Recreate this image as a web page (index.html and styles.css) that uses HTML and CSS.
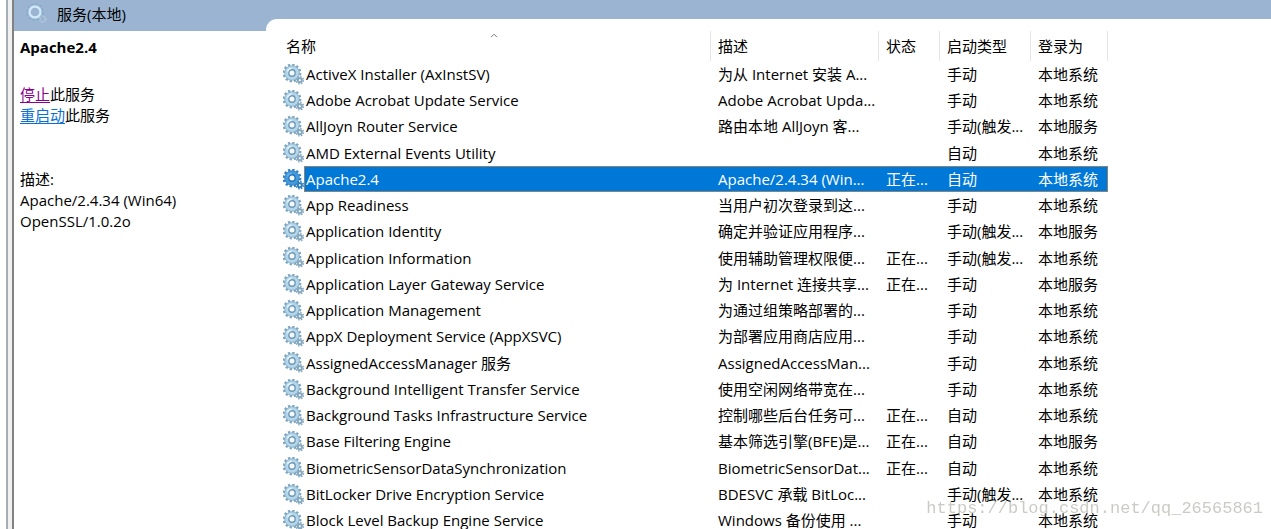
FILE: index.html
```
<!DOCTYPE html>
<html lang="zh-CN">
<head>
  <meta charset="UTF-8" />
  <meta name="viewport" content="width=device-width, initial-scale=1" />
  <title>服务</title>
  <link rel="stylesheet" href="styles.css">
</head>
<body>

  <!-- gear icons shared by all rows -->
  <svg class="defs" aria-hidden="true">
    <defs>
      <g id="gearShape">
        <circle cx="9" cy="9" r="8.2" fill="none" stroke="var(--teeth)" stroke-width="2.4" stroke-dasharray="2.3 1.99" />
        <circle cx="9" cy="9" r="5.4" fill="none" stroke="var(--ring)" stroke-width="4.2" />
        <circle cx="9" cy="9" r="7.3" fill="none" stroke="var(--edge)" stroke-width="0.6" />
        <circle cx="9" cy="9" r="3.2" fill="var(--hole)" stroke="var(--edge)" stroke-width="1.4" />
        <path d="M4.4 7.6a5 5 0 0 1 4.2-3.4" fill="none" stroke="var(--shine)" stroke-width="1.6" />
        <circle cx="16.8" cy="16.2" r="3.5" fill="none" stroke="var(--small)" stroke-width="1.8" stroke-dasharray="1.4 1.35" />
        <circle cx="16.8" cy="16.2" r="2" fill="none" stroke="var(--small)" stroke-width="2" />
        <circle cx="16.8" cy="16.2" r="0.8" fill="var(--hole)" />
      </g>
    </defs>
  </svg>

  <div class="splitter"></div>

  <div class="console">
    <aside class="side">
      <div class="title">
        <svg class="title-icon" viewBox="0 0 21 21" aria-hidden="true">
          <circle cx="9" cy="9" r="8" fill="none" stroke="#86a9c8" stroke-width="1.6" stroke-dasharray="2.2 2" />
          <circle cx="9" cy="9" r="5.6" fill="none" stroke="#d3e8f6" stroke-width="2.6" />
          <circle cx="9" cy="9" r="7" fill="none" stroke="#8fb6d4" stroke-width="0.7" />
          <circle cx="16.8" cy="16.2" r="2.8" fill="none" stroke="#b4c9d9" stroke-width="2" stroke-dasharray="1.3 1" />
        </svg>
        <span>服务(本地)</span>
      </div>
      <div class="detail">
        <h1>Apache2.4</h1>
        <p><a href="#stop" class="visited">停止</a>此服务</p>
        <p><a href="#restart">重启动</a>此服务</p>
        <div class="description">
          <p>描述:</p>
          <p>Apache/2.4.34 (Win64) OpenSSL/1.0.2o</p>
        </div>
      </div>
    </aside>

    <main class="list">
      <table>
        <colgroup>
          <col class="col-name">
          <col class="col-desc">
          <col class="col-state">
          <col class="col-start">
          <col class="col-logon">
        </colgroup>
        <thead>
          <tr>
            <th>名称
              <svg class="sort" viewBox="0 0 8 5" aria-hidden="true"><path d="M1 4.2 4 1.2 7 4.2" fill="none" stroke="#7a7a7a" stroke-width="1" /></svg>
            </th>
            <th>描述</th>
            <th>状态</th>
            <th>启动类型</th>
            <th>登录为</th>
          </tr>
        </thead>
        <tbody id="services"></tbody>
      </table>
    </main>
  </div>

  <div class="watermark">https://blog.csdn.net/qq_26565861</div>

<script>
  // name, description, state, startup type, log on as
  const services = [
    ['ActiveX Installer (AxInstSV)', '为从 Internet 安装 A...', '', '手动', '本地系统'],
    ['Adobe Acrobat Update Service', 'Adobe Acrobat Upda...', '', '手动', '本地系统'],
    ['AllJoyn Router Service', '路由本地 AllJoyn 客...', '', '手动(触发...', '本地服务'],
    ['AMD External Events Utility', '', '', '自动', '本地系统'],
    ['Apache2.4', 'Apache/2.4.34 (Win...', '正在...', '自动', '本地系统'],
    ['App Readiness', '当用户初次登录到这...', '', '手动', '本地系统'],
    ['Application Identity', '确定并验证应用程序...', '', '手动(触发...', '本地服务'],
    ['Application Information', '使用辅助管理权限便...', '正在...', '手动(触发...', '本地系统'],
    ['Application Layer Gateway Service', '为 Internet 连接共享...', '正在...', '手动', '本地服务'],
    ['Application Management', '为通过组策略部署的...', '', '手动', '本地系统'],
    ['AppX Deployment Service (AppXSVC)', '为部署应用商店应用...', '', '手动', '本地系统'],
    ['AssignedAccessManager 服务', 'AssignedAccessMan...', '', '手动', '本地系统'],
    ['Background Intelligent Transfer Service', '使用空闲网络带宽在...', '', '手动', '本地系统'],
    ['Background Tasks Infrastructure Service', '控制哪些后台任务可...', '正在...', '自动', '本地系统'],
    ['Base Filtering Engine', '基本筛选引擎(BFE)是...', '正在...', '自动', '本地服务'],
    ['BiometricSensorDataSynchronization', 'BiometricSensorDat...', '正在...', '自动', '本地系统'],
    ['BitLocker Drive Encryption Service', 'BDESVC 承载 BitLoc...', '', '手动(触发...', '本地系统'],
    ['Block Level Backup Engine Service', 'Windows 备份使用 ...', '', '手动', '本地系统']
  ];
  const selected = 'Apache2.4';

  const tbody = document.getElementById('services');
  services.forEach(([name, ...rest]) => {
    const tr = document.createElement('tr');
    if (name === selected) tr.className = 'selected';
    tr.innerHTML = `<td><div class="name"><svg class="gear" viewBox="0 0 21 21" aria-hidden="true"><use href="#gearShape" /></svg><span>${name}</span></div></td>`
      + rest.map(text => `<td>${text}</td>`).join('');
    tbody.appendChild(tr);
  });
</script>

</body>
</html>
```
FILE: styles.css
```
* {
  box-sizing: border-box;
}
body {
  margin: 0;
  height: 100vh;
  display: flex;
  overflow: hidden;
  background: #fff;
  color: #000;
  font-family: 'Open Sans', 'Noto Sans CJK SC', sans-serif;
  font-size: 15px;
}
p, h1 {
  margin: 0;
}
.defs {
  position: absolute;
  width: 0;
  height: 0;
}

.splitter {
  width: 8px;
  margin-left: 6px;
  flex: none;
  background: #f0f0f0;
  border-left: 2px solid #a5aeb5;
  border-right: 2px solid #828282;
}
.console {
  flex: 1;
  display: grid;
  grid-template-columns: 252px 1fr;
  background: #9ab4d2;
  overflow: hidden;
}

/* left pane */
.side {
  display: flex;
  flex-direction: column;
}
.title {
  height: 31px;
  padding: 0 0 4px 12px;
  display: flex;
  align-items: center;
  gap: 10px;
}
.title-icon {
  width: 21px;
  height: 21px;
}
.detail {
  flex: 1;
  padding: 6px 60px 0 6px;
  background: #fff;
  line-height: 21px;
}
.detail h1 {
  font-size: 15px;
  line-height: 21px;
  margin-bottom: 26px;
}
.detail a {
  color: #0a6fd6;
  text-underline-offset: 2px;
}
.detail a.visited {
  color: #8b008b;
}
.description {
  margin-top: 43px;
}

/* service list */
.list {
  margin-top: 19px;
  padding: 12px 0 0 12px;
  background: #fff;
  border-top-left-radius: 11px;
  overflow: hidden;
}
table {
  table-layout: fixed;
  width: 830px;
  border-collapse: separate;
  border-spacing: 0;
}
.col-name { width: 433px; }
.col-desc { width: 168px; }
.col-state { width: 61px; }
.col-start { width: 91px; }
.col-logon { width: 77px; }

th {
  position: relative;
  height: 30px;
  padding: 0 0 2px 7px;
  border-right: 1px solid #e5e5e5;
  font-weight: normal;
  text-align: left;
}
th:first-child {
  padding-left: 8px;
}
.sort {
  position: absolute;
  top: 2px;
  left: 49%;
  width: 8px;
  height: 5px;
}
td {
  height: 26px;
  padding: 0 0 0 7px;
  line-height: 22px;
  white-space: nowrap;
}
tbody tr:nth-child(4n) td {
  height: 27px;
}
td:first-child {
  padding-left: 5px;
}
.name {
  display: flex;
  align-items: center;
  height: 26px;
}
.name span {
  flex: 1;
  padding-left: 1px;
  border: 1px solid transparent;
  line-height: 24px;
}
.gear {
  --teeth: #7ea6c1;
  --ring: #b4d6ea;
  --edge: #6f98b5;
  --shine: #e4f4fc;
  --hole: #f4f9fc;
  --small: #86a9c0;
  width: 21px;
  height: 21px;
  flex: none;
}

.selected .gear {
  --teeth: #2f82c6;
  --ring: #459bdc;
  --edge: #2373b8;
  --shine: #6bb4ea;
  --small: #2f7fc0;
}
.selected td {
  color: #fff;
}
.selected td:not(:first-child),
.selected .name span {
  background: #0078d7;
  border: 1px solid #8a8478;
  border-width: 1px 0;
}
.selected td:last-child {
  border-right-width: 1px;
}
.selected .name span {
  border-left-width: 1px;
}

.watermark {
  position: fixed;
  right: 8px;
  bottom: 9px;
  color: rgba(160, 160, 150, 0.55);
  font-family: 'Liberation Mono', monospace;
  font-size: 17px;
  line-height: 22px;
}
```
